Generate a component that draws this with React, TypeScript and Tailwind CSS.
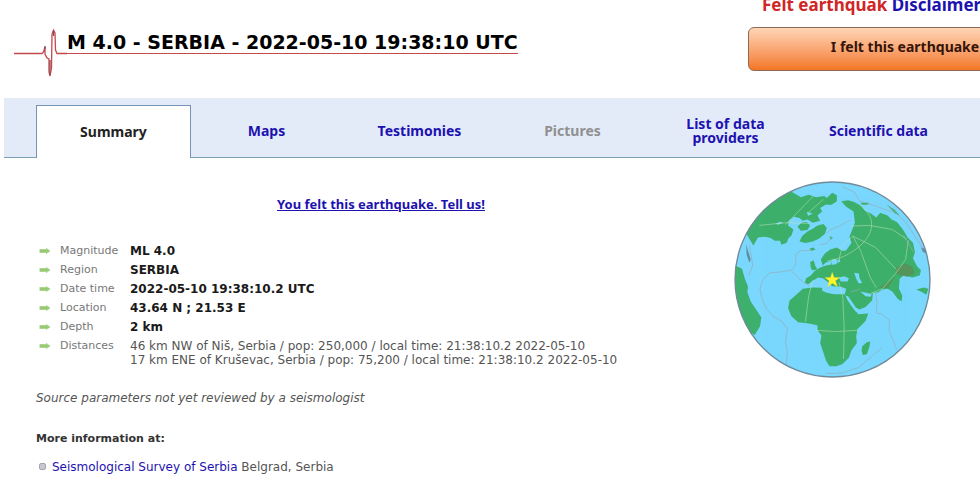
import React from "react";

const tabs = [
  { label: "Summary", state: "active" },
  { label: "Maps", state: "link" },
  { label: "Testimonies", state: "link" },
  { label: "Pictures", state: "disabled" },
  { label: "List of data providers", state: "link" },
  { label: "Scientific data", state: "link" },
];

const details = [
  { label: "Magnitude", value: "ML 4.0" },
  { label: "Region", value: "SERBIA" },
  { label: "Date time", value: "2022-05-10 19:38:10.2 UTC" },
  { label: "Location", value: "43.64 N ; 21.53 E" },
  { label: "Depth", value: "2 km" },
];

const distances = [
  "46 km NW of Niš, Serbia / pop: 250,000 / local time: 21:38:10.2 2022-05-10",
  "17 km ENE of Kruševac, Serbia / pop: 75,200 / local time: 21:38:10.2 2022-05-10",
];

function Seismogram() {
  return (
    <svg width="53" height="50" viewBox="0 0 53 50" fill="none" className="shrink-0" aria-hidden="true">
      <path d="M0 25.5H28L29.5 24L31 19V26L33 30L35 31V44L36 48L37.5 40L38 6L39.5 2L41 5L41.500 22L43 25.500H53" stroke="#c4484c" strokeWidth="1.300" />
      <path d="M36 47V32M39.500 3V8M31 18V21" stroke="#8a4a50" strokeWidth="1.300" />
    </svg>
  );
}

function Arrow() {
  return (
    <svg width="12" height="8" viewBox="0 0 12 8" className="shrink-0" aria-hidden="true">
      <path d="M0.500 2H7V0.800L11.500 4L7 7.200V6H0.500Z" fill="#a9d68a" />
      <path d="M1 4H10" stroke="#86bb62" />
    </svg>
  );
}

function Globe() {
  return (
    <svg viewBox="26 27 590 590" className="block w-[197px]" role="img" aria-label="Epicenter location">
      <defs>
        <clipPath id="disc">
          <circle cx="321" cy="322" r="292" />
        </clipPath>
      </defs>
      <circle cx="321" cy="322" r="292" fill="#7ad7fd" />
      <g clipPath="url(#disc)">
        <g fill="#3cb06c">
          {/* North America and Greenland */}
          <path d="M196 58L226 76L250 68L272 76L296 72L304 78L320 62L334 70L334 88L318 98L300 98L284 108L290 118L276 130L284 146L262 152L246 142L232 146L222 138L206 134L190 146L188 160L204 172L198 190L188 200L184 212L168 218L164 206L148 206L136 198L118 194L98 196L84 220L60 180L150 60Z" />
          <path d="M222 208L230 192L246 178L262 170L276 160L294 156L304 168L298 186L280 200L262 208L240 213Z" />
          <path d="M228 152L244 150L254 160L246 174L226 176L216 164Z" />
          {/* South America */}
          <path d="M30 280L50 290L58 318L68 344L66 360L76 388L108 436L104 462L88 488L60 470L26 400Z" />
          {/* Europe and Asia */}
          <path d="M347 88L368 85L386 90L408 102L418 116L436 124L452 136L464 122L486 130L498 142L514 150L532 172L546 196L562 212L568 240L562 258L574 282L586 294L582 310L560 316L534 310L522 320L520 350L530 370L528 388L516 380L500 358L486 350L470 352L458 360L442 362L440 384L420 404L402 412L388 404L372 384L358 366L362 350L346 344L320 342L308 330L292 318L278 316L262 326L248 336L238 332L242 318L256 310L266 298L280 288L294 282L312 278L332 276L344 268L342 254L350 246L364 232L378 212L372 194L378 178L388 152L384 118L362 104Z" />
          <path d="M286 262L298 244L314 232L334 226L350 236L366 236L360 258L340 262L334 278L318 282L316 266L300 272L292 280Z" />
          <path d="M254 270L264 264L270 282L276 292L260 294L256 286Z" />
          <path d="M252 230L264 226L270 232L258 237Z" />
          {/* Africa and Madagascar */}
          <path d="M214 366L232 350L262 346L290 347L306 350L308 362L330 366L348 362L360 368L366 384L384 406L398 426L428 424L420 446L396 470L392 492L394 512L378 534L370 556L350 576L332 582L312 582L302 566L292 536L284 512L288 490L276 474L276 460L262 456L240 452L218 450L198 432L188 408L192 386Z" />
          <path d="M410 522L424 510L434 508L432 522L424 546L412 548L408 536Z" />
          <path d="M572 352L594 346L608 350L602 368L590 360Z" />
          <path d="M404 92L432 92L426 98L410 98Z" />
          <path d="M484 98L508 124L522 130L506 112Z" />
          <path d="M312 192L322 196L316 204Z" />
        </g>
        <path d="M62 216L68 236L76 262L72 272L64 248Z" fill="#5b8fa0" />
        <path d="M586 226L600 230L604 244L592 240Z" fill="#5b8fa0" />
        <path d="M508 288L540 274L560 284L568 304L544 314L514 306Z" fill="#5f8a55" opacity="0.7" />
        <path d="M458 348L480 332L508 312L488 348Z" fill="#4f9a5c" />
        {/* Inland seas and bays */}
        <g fill="#7ad7fd">
          <path d="M386 302L400 304L402 318L410 332L400 334L392 320Z" />
          <path d="M340 316L356 312L370 318L366 328L346 328Z" />
          <path d="M290 344L316 352L358 352V366L330 366L304 362L290 356Z" />
          <path d="M360 370L368 372L386 398L398 420L390 418L374 396Z" />
          <path d="M404 358L422 362L438 366L436 374L420 372Z" />
          <path d="M316 266L326 260L338 264L332 276L320 278Z" />
          <path d="M150 154L166 149L172 153L158 158Z" />
          <path d="M244 120L262 124L248 131Z" />
        </g>
        <g fill="none" stroke="#9aabb4" strokeWidth="2">
          <path d="M302 184L320 170L342 162L362 150L376 144M282 218L304 214L318 196M262 234L226 236L212 246L210 280L198 294L160 300L134 302L112 322L104 350L110 380L122 408L140 430L168 446L186 470L180 510L186 540L182 584" />
          <path d="M198 296L230 328L250 340M450 362L454 390L452 422L468 426L492 444L490 474L504 508L514 534" />
          <path d="M376 360L404 350M72 218L82 280L70 310M350 44L386 60L402 86L456 104L500 120M470 526L398 586L348 602L300 604" />
          <path d="M484 98L540 150L594 232M534 190L564 240" />
        </g>
        {/* Graticule */}
        <g fill="none" stroke="#bfe3b5" strokeWidth="2" opacity="0.8">
          <path d="M102 160L180 152L250 154M180 158L264 72M246 124L294 82M382 192L350 222L340 264M382 192L406 238L434 316L452 346M382 192L450 226L512 292M376 162L430 160L500 172L544 202" />
          <path d="M404 100C460 140 444 200 378 240C350 258 330 262 306 266" />
          <path d="M262 324L250 370L240 448M340 330L352 376L356 470L354 560M270 474L330 478L398 474M434 364L470 350L510 304L540 262L548 204" />
        </g>
      </g>
      <path d="M320 300L326 316L343 316L330 326L336 344L321 333L306 344L311 326L298 316L315 316Z" fill="#fff629" stroke="#d7d64c" strokeWidth="1" />
      <circle cx="321" cy="322" r="292" fill="none" stroke="#708a98" strokeWidth="4" />
    </svg>
  );
}

function Tab({ label, state }: { label: string; state: string }) {
  const base = "flex shrink-0 items-center justify-center text-center";
  if (state === "active") {
    return (
      <a href="#summary" aria-current="page" className={`${base} -mr-px -mb-px w-[155px] border border-b-0 border-[#7593b5] bg-white text-[#222]`}>
        {label}
      </a>
    );
  }
  if (state === "disabled") {
    return <span className={`${base} w-[153px] text-[#909090]`}>{label}</span>;
  }
  return (
    <a href="#tab" className={`${base} w-[153px] px-6 text-[#1d12b0]`}>
      {label}
    </a>
  );
}

export default function App() {
  return (
    <div className="overflow-hidden bg-white pl-1 font-['DejaVu_Sans',Verdana,sans-serif] text-xs leading-[14px] text-[#555]">
      <header className="flex h-[98px] justify-between">
        <h1 className="flex items-start pt-7 pl-[10px] text-[19px] font-bold text-black">
          <Seismogram />
          <span className="h-[26px] border-b border-[#c4484c] leading-7 whitespace-nowrap">
            M 4.0 - SERBIA - 2022-05-10 19:38:10 UTC
          </span>
        </h1>
        <div className="w-[232px] shrink-0 font-['Noto_Sans',Tahoma,sans-serif] font-bold whitespace-nowrap">
          <p className="-mt-1 h-[31px] pl-[14px] text-[17px] leading-[18px]">
            <span className="text-[#cf2626]">Felt earthquak</span>{" "}
            <a href="#disclaimer" className="text-[#1d12b0]">Disclaimer</a>
          </p>
          <button className="h-11 w-[314px] rounded-md border border-[#8f6a55] bg-linear-to-b from-[#fdd5b5] to-[#f2761f] pb-1 text-sm font-bold text-[#35140a]">
            I felt this earthquake
          </button>
        </div>
      </header>

      <nav className="flex h-[60px] border-b border-[#7f9fb8] bg-[#e3ebf9] pt-[7px] pl-8 font-['Noto_Sans',Tahoma,sans-serif] text-sm leading-[14px] font-bold">
        {tabs.map((tab) => (
          <Tab key={tab.label} label={tab.label} state={tab.state} />
        ))}
      </nav>

      <main className="flex pt-[23px] pl-8">
        <section className="w-[690px] shrink-0 pt-4">
          <p className="text-center font-['Noto_Sans',Tahoma,sans-serif] text-[13px] leading-[14px] font-bold">
            <a href="#testimony" className="text-[#1d12b0] underline">You felt this earthquake. Tell us!</a>
          </p>
          <table className="mt-[33px]">
            <tbody>
              {details.map((item) => (
                <tr key={item.label} className="h-[19px] align-top">
                  <td className="w-6 pt-[3px] pl-[3px]"><Arrow /></td>
                  <th scope="row" className="w-[70px] text-left text-[11px] leading-[14px] font-normal text-[#777]">{item.label}</th>
                  <td className="font-bold text-[#1a1a1a]">{item.value}</td>
                </tr>
              ))}
              <tr className="align-top">
                <td className="pt-[3px] pl-[3px]"><Arrow /></td>
                <th scope="row" className="text-left text-[11px] leading-[14px] font-normal text-[#777]">Distances</th>
                <td>
                  {distances.map((line) => (
                    <div key={line}>{line}</div>
                  ))}
                </td>
              </tr>
            </tbody>
          </table>
          <p className="mt-6 italic">Source parameters not yet reviewed by a seismologist</p>
          <h2 className="mt-[27px] text-[11px] leading-[14px] font-bold text-[#333]">More information at:</h2>
          <ul className="mt-[14px]">
            <li className="flex items-start">
              <span className="mt-[3px] mr-[6px] ml-[3px] h-[7px] w-[7px] rounded-xs border border-[#a5a5b5] bg-[#c8c8d2]" />
              <span>
                <a href="#survey" className="text-[#1d12b0]">Seismological Survey of Serbia</a> Belgrad, Serbia
              </span>
            </li>
          </ul>
        </section>
        <aside className="shrink-0 pl-2">
          <Globe />
        </aside>
      </main>
    </div>
  );
}
